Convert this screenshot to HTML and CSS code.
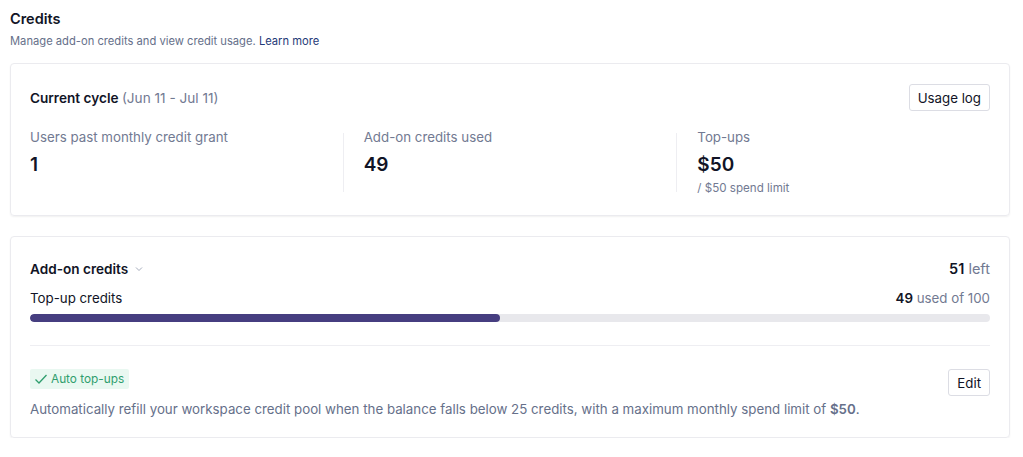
FILE: index.html
```html
<!DOCTYPE html>
<html lang="en">
	<head>
		<meta name="viewport" content="width=device-width, initial-scale=1">
		<link rel="stylesheet" href="styles.css">
	</head>
	<body>
		<div id="page">
			<div class="header">
				<h1>Credits</h1>
				<p>Manage add-on credits and view credit usage. <a href="#">Learn more</a></p>
			</div>

			<div class="card cycle">
				<div class="card-top">
					<h2>Current cycle <span class="muted">(Jun 11 - Jul 11)</span></h2>
					<button class="btn">Usage log</button>
				</div>
				<div class="stats">
					<div class="stat">
						<div class="label">Users past monthly credit grant</div>
						<div class="value">1</div>
					</div>
					<div class="stat">
						<div class="label">Add-on credits used</div>
						<div class="value">49</div>
					</div>
					<div class="stat">
						<div class="label">Top-ups</div>
						<div class="value">$50</div>
						<div class="sub">/ $50 spend limit</div>
					</div>
				</div>
			</div>

			<div class="card addon">
				<div class="row">
					<h2>Add-on credits
						<svg class="chev" width="10" height="10" viewBox="0 0 10 10"><path d="M2 3.5 L5 6.5 L8 3.5" fill="none" stroke="#9aa0b2" stroke-width="0.9"/></svg>
					</h2>
					<div class="left"><b>51</b> <span class="muted">left</span></div>
				</div>
				<div class="row second">
					<div class="name">Top-up credits</div>
					<div class="used"><b>49</b> <span class="muted">used of 100</span></div>
				</div>
				<div class="bar"><div class="fill" style="width: 49%"></div></div>
				<hr>
				<div class="auto">
					<div class="auto-text">
						<span class="badge">
							<svg width="14" height="12" viewBox="0 0 14 12"><path d="M1.5 6.5 L5 10 L12.5 2" fill="none" stroke="#2f9e6e" stroke-width="1.3"/></svg>
							Auto top-ups
						</span>
						<p>Automatically refill your workspace credit pool when the balance falls below 25 credits, with a maximum monthly spend limit of <b>$50</b>.</p>
					</div>
					<button class="btn">Edit</button>
				</div>
			</div>
		</div>
	</body>
</html>
```

FILE: styles.css
```css
* {
	box-sizing: border-box;
}
html {
	font-family: "Inter", "Noto Sans", sans-serif;
	background: white;
	color: #111426;
}
body {
	margin: 0;
}
#page {
	width: 1000px;
	margin-left: 10px;
	padding-top: 9px;
}
.header h1 {
	margin: 0;
	font-size: 14.5px;
	font-weight: 600;
	line-height: 20px;
}
.header p {
	margin: 3px 0 0;
	font-size: 11.2px;
	line-height: 18px;
	color: #66708a;
}
.header a {
	color: #1f3a78;
	text-decoration: none;
}
.muted {
	color: #727a92;
	font-weight: 400;
}
.card {
	border: 1px solid #ebebef;
	border-radius: 4px;
	box-shadow: 0 1px 2px rgba(0, 0, 0, 0.06);
	padding: 0 19px;
}
.cycle {
	margin-top: 13px;
	padding-top: 20px;
	padding-bottom: 23px;
}
.card-top {
	display: flex;
	justify-content: space-between;
	align-items: center;
}
h2 {
	margin: 0;
	font-size: 13.6px;
	font-weight: 600;
}
.btn {
	font-family: inherit;
	font-size: 13.3px;
	color: #111426;
	background: white;
	border: 1px solid #dcdde4;
	border-radius: 3px;
	height: 27px;
	padding: 0 8px;
}
.stats {
	display: flex;
	margin-top: 22px;
}
.stat {
	flex: 1;
	height: 59px;
}
.stat + .stat {
	margin-left: 20px;
	padding-left: 20px;
	border-left: 1px solid #eeeef2;
}
.label {
	font-size: 13.3px;
	color: #727a92;
	line-height: 16px;
	margin-top: -4px;
}
.value {
	font-size: 19px;
	font-weight: 600;
	line-height: 22px;
	margin-top: 9px;
}
.sub {
	font-size: 11.6px;
	color: #727a92;
	line-height: 13px;
	margin-top: 6px;
}
.addon {
	margin-top: 20px;
	padding-top: 23px;
	padding-bottom: 20px;
}
.row {
	display: flex;
	justify-content: space-between;
	align-items: center;
	font-size: 13.3px;
}
.row h2 {
	display: flex;
	align-items: center;
	gap: 6px;
}
.left {
	font-size: 14.5px;
}
.left b, .used b {
	font-weight: 600;
}
.second {
	margin-top: 13px;
}
.bar {
	margin-top: 8px;
	height: 8px;
	border-radius: 4px;
	background: #e8e8ec;
	overflow: hidden;
}
.fill {
	height: 100%;
	background: #463e80;
	border-radius: 4px;
}
hr {
	border: none;
	border-top: 1px solid #eeeef2;
	margin: 23px 0 23px;
}
.auto {
	display: flex;
	justify-content: space-between;
	align-items: flex-start;
}
.badge {
	display: inline-flex;
	align-items: center;
	gap: 3px;
	background: #e9f8f1;
	color: #2f9e6e;
	font-size: 11.8px;
	height: 20px;
	padding: 0 5px 0 4px;
	border-radius: 2px;
}
.auto p {
	margin: 12px 0 0;
	font-size: 13.3px;
	color: #66708a;
}
.auto p b {
	font-weight: 600;
}
```
